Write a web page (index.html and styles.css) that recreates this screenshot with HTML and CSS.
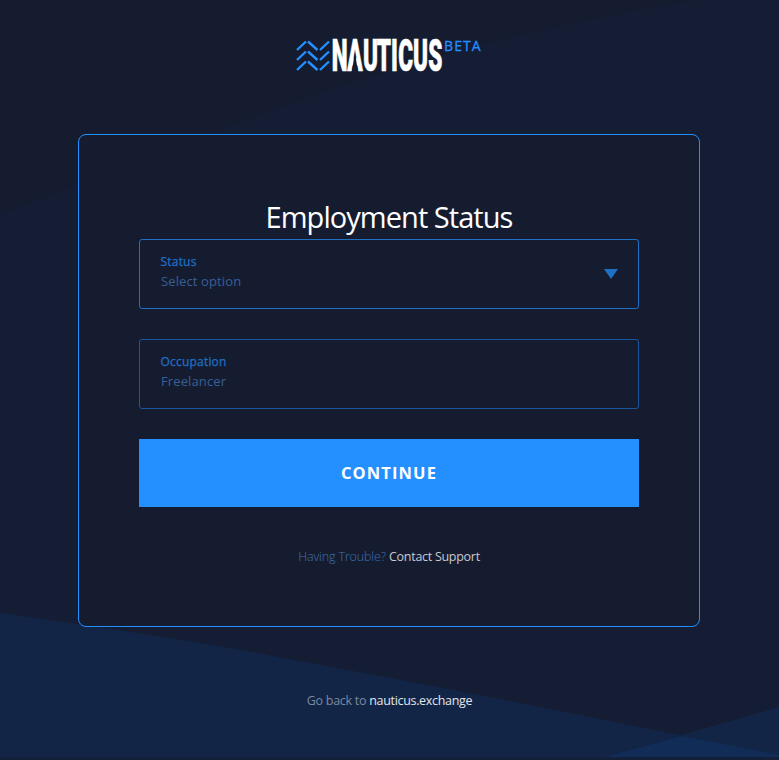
FILE: index.html
```html
<!DOCTYPE html>
<html lang="en">
<head>
<meta charset="utf-8">
<title>Employment Status</title>
<link rel="stylesheet" href="styles.css">
</head>
<body>
<svg class="backdrop" viewBox="0 0 779 760" aria-hidden="true">
  <path fill="#151d34" d="M0 215Q110 170 214 132Q300 99 373 76Q450 53 522 35Q610 14 700 0H779V760H0Z"/>
  <path fill="#122546" d="M0 613Q110 628 219 646Q390 677 560 711L779 755V757H0Z"/>
  <path fill="#122546" d="M605 757L779 707V757Z"/>
  <path fill="#112c57" d="M605 757L682 736L779 755V757Z"/>
  <path fill="#142039" d="M0 757H779V760H0Z"/>
</svg>
<main class="page">
  <header class="brand">
    <svg class="logo" width="148" height="60" viewBox="0 -10 148 60">
      <g fill="none" stroke="#248fff" stroke-width="2.400">
        <path d="M0 15L9 6.500M11 6.500L20.500 15M23 15L32 6.500"/>
        <path d="M0 25L9 16.500M11 16.500L20.500 25M23 25L32 16.500"/>
        <path d="M0 35L9 26.500M11 26.500L20.500 35M23 35L32 26.500"/>
      </g>
      <text class="wordmark" transform="translate(0 35.700) scale(.52 1)" x="82.100 111.300 141.300 167.300 187.500 208.800 237.300 265.800">NAUTICUS</text>
      <path fill="#161c30" d="M54.800 37L57.900 17L61 37Z"/>
    </svg>
    <span class="beta">BETA</span>
  </header>
  <section class="card">
    <h1 class="title">Employment Status</h1>
    <div class="field field-select">
      <div class="field-text"><div class="label">Status</div><div class="value">Select option</div></div>
      <svg width="14" height="10" viewBox="0 0 14 10"><path fill="#1f6fc5" d="M0 0H14L7 10Z"/></svg>
    </div>
    <div class="field">
      <div class="field-text"><div class="label">Occupation</div><div class="value">Freelancer</div></div>
    </div>
    <button class="continue">CONTINUE</button>
    <p class="help">Having Trouble? <a>Contact Support</a></p>
  </section>
  <footer class="back">Go back to <a>nauticus.exchange</a></footer>
</main>
</body>
</html>
```
FILE: styles.css
```css
* { box-sizing: border-box; }
body { margin: 0; background: #161c30; font-family: "Open Sans", sans-serif; color: #fff; }
.backdrop { position: absolute; left: 0; top: 0; width: 779px; height: 760px; }
.page { position: relative; height: 760px; display: flex; flex-direction: column; align-items: center; overflow: hidden; }
.brand { display: flex; align-items: flex-start; height: 134px; padding-top: 25px; width: 187px; margin-left: 2px; }
.logo { flex: none; display: block; overflow: visible; }
.wordmark { font: 900 43.5px Roboto, sans-serif; fill: #fff; stroke: #fff; stroke-width: .7px; text-anchor: middle; }
.beta { font-size: 14px; font-weight: 400; -webkit-text-stroke: .3px #248fff; line-height: 20px; color: #248fff; letter-spacing: 1.1px; margin: 11px 0 0 -1px; }
.card { width: 622px; height: 493px; margin-right: 1px; border: 1px solid #248fff; border-radius: 8px; background: #161c30; padding: 64px 60px 0; display: flex; flex-direction: column; }
.title { margin: 0; height: 40px; line-height: 36px; font-size: 29px; font-weight: 400; text-align: center; letter-spacing: -.95px; }
.field { height: 70px; flex: none; border: 1px solid #1a569b; border-radius: 3px; margin-bottom: 30px; padding: 12px 20px 0 21px; display: flex; justify-content: space-between; }
.field-select { border-color: #1f6fc5; }
.field svg { margin-top: 17px; }
.label { margin-left: -.5px; font-size: 12px; line-height: 20px; -webkit-text-stroke: .25px #1f6fc5; letter-spacing: .2px; color: #1f6fc5; }
.value { font-size: 13px; line-height: 18px; letter-spacing: .12px; color: #365f95; }
.continue { height: 68px; flex: none; border: 0; background: #248fff; color: #fff; font: 700 16.5px "Open Sans", sans-serif; letter-spacing: 1.1px; padding: 0 0 1px; }
.help { margin: 40px 0 0; text-align: center; font-size: 12.5px; line-height: 20px; font-weight: 300; letter-spacing: -.14px; color: #4070ae; }
.help a { font-weight: 400; letter-spacing: -.28px; color: #c8cacf; }
.back { margin-top: 64px; font-size: 12.5px; line-height: 20px; letter-spacing: -.28px; color: #7b899e; }
.back a { letter-spacing: -.32px; color: #e3e6eb; }
```
